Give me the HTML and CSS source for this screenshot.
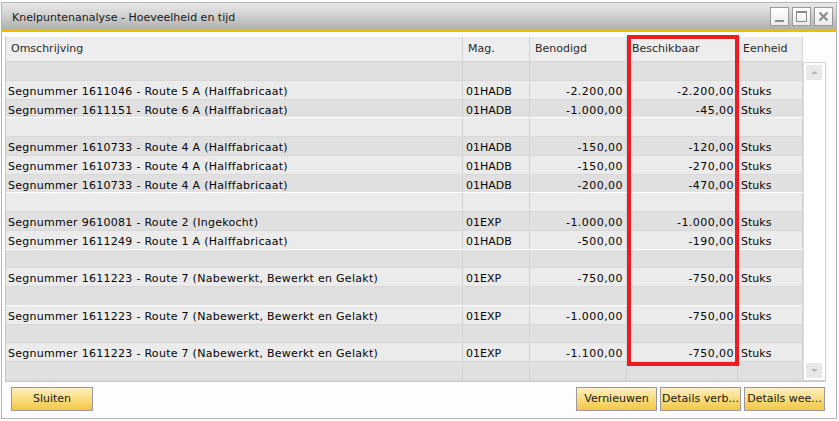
FILE: index.html
```html
<!DOCTYPE html>
<html>
<head>
<meta charset="utf-8">
<title>Knelpuntenanalyse</title>
<link rel="stylesheet" href="styles.css">
</head>
<body>
<div class="window">
  <div class="titlebar">
    <span class="title">Knelpuntenanalyse - Hoeveelheid en tijd</span>
    <div class="wbtns">
      <span class="wbtn"><svg width="17" height="17" viewBox="0 0 17 17"><rect x="4" y="12" width="9" height="2" fill="#8c8c8c"/></svg></span>
      <span class="wbtn"><svg width="17" height="17" viewBox="0 0 17 17"><rect x="3.5" y="3.5" width="10" height="10" fill="none" stroke="#8c8c8c"/><rect x="3" y="3" width="11" height="2" fill="#8c8c8c"/></svg></span>
      <span class="wbtn"><svg width="17" height="17" viewBox="0 0 17 17"><path d="M4.5 4.5 L12.5 12.5 M12.5 4.5 L4.5 12.5" stroke="#8c8c8c" stroke-width="2.2"/></svg></span>
    </div>
  </div>
  <div class="content">
    <div class="grid">
      <div class="ghead">
        <div class="hc c1">Omschrijving</div>
        <div class="hc c2">Mag.</div>
        <div class="hc c3">Benodigd</div>
        <div class="hc c4">Beschikbaar</div>
        <div class="hc c5">Eenheid</div>
      </div>
      <div class="gbody">
        <div class="rows">
          <div class="row dark"><div class="c c1"></div><div class="c c2"></div><div class="c c3"></div><div class="c c4"></div><div class="c c5"></div></div>
          <div class="row"><div class="c c1">Segnummer 1611046 - Route 5 A (Halffabricaat)</div><div class="c c2">01HADB</div><div class="c c3 num">-2.200,00</div><div class="c c4 num">-2.200,00</div><div class="c c5">Stuks</div></div>
          <div class="row dark sep"><div class="c c1">Segnummer 1611151 - Route 6 A (Halffabricaat)</div><div class="c c2">01HADB</div><div class="c c3 num">-1.000,00</div><div class="c c4 num">-45,00</div><div class="c c5">Stuks</div></div>
          <div class="row"><div class="c c1"></div><div class="c c2"></div><div class="c c3"></div><div class="c c4"></div><div class="c c5"></div></div>
          <div class="row dark"><div class="c c1">Segnummer 1610733 - Route 4 A (Halffabricaat)</div><div class="c c2">01HADB</div><div class="c c3 num">-150,00</div><div class="c c4 num">-120,00</div><div class="c c5">Stuks</div></div>
          <div class="row"><div class="c c1">Segnummer 1610733 - Route 4 A (Halffabricaat)</div><div class="c c2">01HADB</div><div class="c c3 num">-150,00</div><div class="c c4 num">-270,00</div><div class="c c5">Stuks</div></div>
          <div class="row dark sep"><div class="c c1">Segnummer 1610733 - Route 4 A (Halffabricaat)</div><div class="c c2">01HADB</div><div class="c c3 num">-200,00</div><div class="c c4 num">-470,00</div><div class="c c5">Stuks</div></div>
          <div class="row"><div class="c c1"></div><div class="c c2"></div><div class="c c3"></div><div class="c c4"></div><div class="c c5"></div></div>
          <div class="row dark"><div class="c c1">Segnummer 9610081 - Route 2 (Ingekocht)</div><div class="c c2">01EXP</div><div class="c c3 num">-1.000,00</div><div class="c c4 num">-1.000,00</div><div class="c c5">Stuks</div></div>
          <div class="row sep"><div class="c c1">Segnummer 1611249 - Route 1 A (Halffabricaat)</div><div class="c c2">01HADB</div><div class="c c3 num">-500,00</div><div class="c c4 num">-190,00</div><div class="c c5">Stuks</div></div>
          <div class="row dark"><div class="c c1"></div><div class="c c2"></div><div class="c c3"></div><div class="c c4"></div><div class="c c5"></div></div>
          <div class="row"><div class="c c1">Segnummer 1611223 - Route 7 (Nabewerkt, Bewerkt en Gelakt)</div><div class="c c2">01EXP</div><div class="c c3 num">-750,00</div><div class="c c4 num">-750,00</div><div class="c c5">Stuks</div></div>
          <div class="row dark sep"><div class="c c1"></div><div class="c c2"></div><div class="c c3"></div><div class="c c4"></div><div class="c c5"></div></div>
          <div class="row"><div class="c c1">Segnummer 1611223 - Route 7 (Nabewerkt, Bewerkt en Gelakt)</div><div class="c c2">01EXP</div><div class="c c3 num">-1.000,00</div><div class="c c4 num">-750,00</div><div class="c c5">Stuks</div></div>
          <div class="row dark"><div class="c c1"></div><div class="c c2"></div><div class="c c3"></div><div class="c c4"></div><div class="c c5"></div></div>
          <div class="row"><div class="c c1">Segnummer 1611223 - Route 7 (Nabewerkt, Bewerkt en Gelakt)</div><div class="c c2">01EXP</div><div class="c c3 num">-1.100,00</div><div class="c c4 num">-750,00</div><div class="c c5">Stuks</div></div>
          <div class="row dark"><div class="c c1"></div><div class="c c2"></div><div class="c c3"></div><div class="c c4"></div><div class="c c5"></div></div>
        </div>
        <div class="scroll">
          <span class="sbtn"><svg width="15" height="15" viewBox="0 0 15 15"><path d="M4 9 L7.5 6 L11 9 Z" fill="#b8b8b8"/></svg></span>
          <span class="sbtn"><svg width="15" height="15" viewBox="0 0 15 15"><path d="M4 6 L7.5 9 L11 6 Z" fill="#b8b8b8"/></svg></span>
        </div>
      </div>
      <div class="highlight"></div>
    </div>
    <div class="buttons">
      <button class="btn">Sluiten</button>
      <span class="spacer"></span>
      <button class="btn">Vernieuwen</button>
      <button class="btn">Details verb...</button>
      <button class="btn">Details wee...</button>
    </div>
  </div>
</div>
</body>
</html>
```

FILE: styles.css
```css
* { box-sizing: border-box; }
html, body { margin: 0; padding: 0; background: #ffffff; }
body {
  font-family: "DejaVu Sans", "Liberation Sans", sans-serif;
  font-size: 11px;
  color: #111;
  width: 839px;
  height: 421px;
  overflow: hidden;
}
.window {
  margin: 2px 0 0 1px;
  width: 836px;
  height: 417px;
  border: 1px solid #b4b4b4;
  background: #fdfdfd;
  display: flex;
  flex-direction: column;
}
.titlebar {
  height: 29px;
  border-bottom: 3px solid #f5b800;
  background: linear-gradient(#e9e9e9, #d2d2d2 45%, #b0b0b0);
  display: flex;
  align-items: flex-start;
  padding: 4px 3px 0 10px;
}
.title {
  flex: 1;
  font-size: 11px;
  color: #1a1a1a;
  line-height: 19px;
  padding-top: 1px;
}
.wbtns { display: flex; gap: 3px; }
.wbtn {
  width: 19px;
  height: 19px;
  border: 1px solid #9a9a9a;
  background: linear-gradient(#ffffff, #ececec);
  display: flex;
  align-items: center;
  justify-content: center;
}
.wbtn svg { display: block; }
.content {
  flex: 1;
  padding: 5px 0 0 3px;
  display: flex;
  flex-direction: column;
}
.grid {
  position: relative;
  width: 821px;
}
.ghead {
  display: flex;
  height: 25px;
  width: 798px;
  border-left: 1px solid #c8c8c8;
  background: #ededed;
  border-bottom: 1px solid #d6d6d6;
}
.hc {
  height: 100%;
  border-right: 1px solid #d4d4d4;
  color: #2a2a2a;
  padding: 5px 0 0 5px;
  line-height: 14px;
  white-space: nowrap;
}
.c1 { width: 457px; }
.c2 { width: 67px; }
.c3 { width: 97px; }
.c4 { width: 111px; }
.c5 { width: 65px; }
.gbody {
  display: flex;
  border-left: 1px solid #c8c8c8;
  border-bottom: 1px solid #c8c8c8;
}
.rows { width: 797px; }
.row {
  display: flex;
  height: 18.75px;
  background: #ebebeb;
  border-bottom: 1px solid #d8d8d8;
}
.row.dark { background: #e0e0e0; }
.row.sep { border-bottom-color: #ffffff; }
.c {
  height: 100%;
  border-right: 1px solid #d2d2d2;
  line-height: 17px;
  padding: 2px 0 0 2px;
  white-space: nowrap;
  overflow: hidden;
  letter-spacing: 0.28px;
  color: #050505;
}
.c.c2 { padding-left: 3px; letter-spacing: 0; }
.c.c5 { padding-left: 3px; letter-spacing: 0; }
.c.num { text-align: right; padding: 2px 3px 0 0; letter-spacing: 0.45px; }
.scroll {
  width: 23px;
  border: 1px solid #d0d0d0;
  border-left-color: #dcdcdc;
  background: #ffffff;
  display: flex;
  flex-direction: column;
  justify-content: space-between;
  padding: 2px 2px;
}
.sbtn {
  width: 16px;
  height: 15px;
  background: #e8e8e8;
  display: flex;
  align-items: center;
  justify-content: center;
}
.highlight {
  position: absolute;
  left: 622px;
  top: -2px;
  width: 112px;
  height: 331px;
  border: 4px solid #ec1c24;
  pointer-events: none;
}
.buttons {
  display: flex;
  gap: 3px;
  margin-top: 5px;
  padding: 0 11px 0 6px;
  height: 24px;
}
.spacer { flex: 1; }
.btn {
  width: 81px;
  height: 24px;
  border: 1px solid #9a9a9a;
  background: linear-gradient(#fdf0bd, #f8dc7e 50%, #f2c845);
  font-family: "DejaVu Sans", "Liberation Sans", sans-serif;
  font-size: 11px;
  color: #1a1a1a;
  padding: 0;
  white-space: nowrap;
  overflow: hidden;
}
.btn:first-child { width: 82px; }
```
